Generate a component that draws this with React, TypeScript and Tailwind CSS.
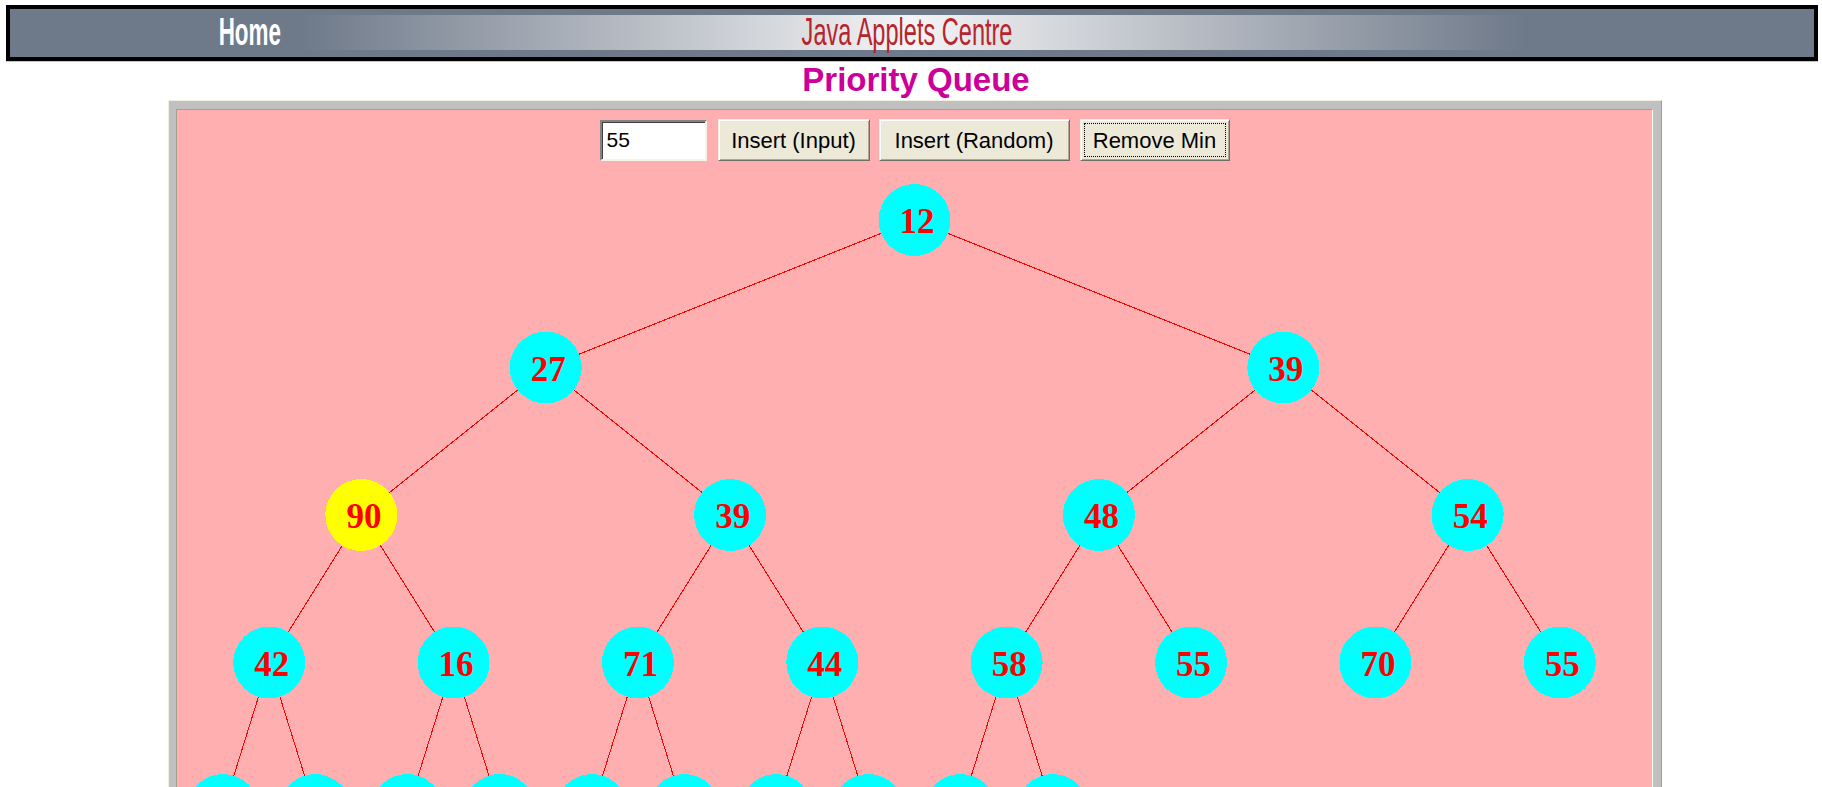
import React from 'react';

// heap contents as shown (level order); the last row is cut off by the window
const values = [
  12, 27, 39, 90, 39, 48, 54, 42, 16, 71, 44, 58, 55, 70, 55,
  84, 61, 96, 33, 75, 88, 52, 67, 91, 73,
];

const CANVAS_W = 1475;
const ROOT_Y = 59;
const LEVEL_DY = 147.5;
const R = 36;

function nodePos(k: number) {
  const d = Math.floor(Math.log2(k + 1));
  const i = k + 1 - Math.pow(2, d);
  const span = CANVAS_W / Math.pow(2, d);
  return { x: (i + 0.5) * span, y: ROOT_Y + d * LEVEL_DY, d };
}

function HeapTree() {
  return (
    <svg width={CANVAS_W} height={700} className="block">
      {/* Edges */}
      {values.map((_, k) => {
        if (k === 0) return null;
        const p = nodePos((k - 1) >> 1);
        const c = nodePos(k);
        return (
          <line
            key={`e${k}`}
            x1={p.x}
            y1={p.y}
            x2={c.x}
            y2={c.y}
            stroke="#ff0000"
            strokeWidth={1}
            shapeRendering="crispEdges"
          />
        );
      })}

      {/* Nodes */}
      {values.map((v, k) => {
        const { x, y, d } = nodePos(k);
        return (
          <g key={`n${k}`}>
            <circle
              cx={x}
              cy={y}
              r={R}
              fill={k === 3 ? '#ffff00' : '#00ffff'}
              shapeRendering="crispEdges"
            />
            {d < 4 && (
              <text
                x={x + 2.5}
                y={y + 13}
                textAnchor="middle"
                fill="#ff0000"
                fontFamily="'Liberation Serif', 'Times New Roman', serif"
                fontWeight="bold"
                fontSize={35}
              >
                {v}
              </text>
            )}
          </g>
        );
      })}
    </svg>
  );
}

function XpButton({ label, width, focused }: { label: string; width: string; focused?: boolean }) {
  return (
    <button
      className={`${width} h-[42px] p-[3px] flex bg-[#ece9d8] border border-t-[#f1efe2] border-l-[#f1efe2] border-r-[#716f64] border-b-[#716f64] shadow-[inset_1px_1px_0_#ffffff,inset_-1px_-1px_0_#aca899] text-[22px] leading-none text-black`}
      style={{ fontFamily: "'Liberation Sans', Arial, sans-serif" }}
    >
      <span
        className={`flex-1 flex items-center justify-center pt-px ${
          focused ? 'border border-dotted border-black' : 'border border-transparent'
        }`}
      >
        {label}
      </span>
    </button>
  );
}

export default function App() {
  return (
    <div className="h-[787px] w-full overflow-hidden bg-white pt-[5px]">
      {/* Header bar */}
      <div className="ml-[6px] w-[1812px] h-[56px] border-4 border-black bg-[#6e7989] shadow-[0_1px_0_#c4c4c4] flex flex-col">
        <div className="h-[6px]" />
        <div className="h-[35px] flex items-center bg-[linear-gradient(to_right,#6e7989_0%,#6e7989_16%,#f4f4f5_50%,#6e7989_84%,#6e7989_100%)]">
          <div className="w-[480px] flex justify-center">
            <span
              className="inline-block text-[38px] leading-[38px] font-bold text-white scale-x-[0.59] -translate-y-px"
              style={{ fontFamily: "'Liberation Sans', Arial, sans-serif" }}
            >
              Home
            </span>
          </div>
          <div className="flex-1 flex justify-center">
            <span
              className="inline-block text-[38px] leading-[38px] text-[#b8242b] scale-x-[0.62] -translate-x-[5px] -translate-y-px"
              style={{ fontFamily: "'Liberation Sans', Arial, sans-serif" }}
            >
              Java Applets Centre
            </span>
          </div>
          <div className="w-[480px]" />
        </div>
        <div className="flex-1" />
      </div>

      {/* Title */}
      <h1
        className="mt-[3px] pl-[10px] text-center text-[33px] leading-[32px] font-bold text-[#cc0099]"
        style={{ fontFamily: "'Liberation Sans', Arial, sans-serif" }}
      >
        Priority Queue
      </h1>

      {/* Applet frame */}
      <div className="mt-[4px] ml-[168px] w-[1494px] bg-[#c0c0c0] border border-t-[#f1efe2] border-l-[#f1efe2] border-r-[#9d9d9d] border-b-[#9d9d9d] pt-[8px] pl-[7px] pr-[8px]">
        <div className="bg-[#ffafaf] border border-t-[#a59f8f] border-l-[#a59f8f] border-r-[#fffbf0] border-b-[#fffbf0]">
          {/* Controls */}
          <div className="pt-[9px] flex items-center justify-center">
            <input
              readOnly
              value="55"
              className="w-[107px] h-[41px] bg-white pl-[5px] text-[21px] text-black outline-none border-2 border-t-[#848284] border-l-[#848284] border-r-[#f5f3ea] border-b-[#f5f3ea] shadow-[inset_1px_1px_0_#404040]"
              style={{ fontFamily: "'Liberation Sans', Arial, sans-serif" }}
            />
            <div className="ml-[11px]">
              <XpButton label="Insert (Input)" width="w-[152px]" />
            </div>
            <div className="ml-[9px]">
              <XpButton label="Insert (Random)" width="w-[191px]" />
            </div>
            <div className="ml-[10px]">
              <XpButton label="Remove Min" width="w-[150px]" focused />
            </div>
          </div>

          {/* Heap drawing */}
          <HeapTree />
        </div>
      </div>
    </div>
  );
}
